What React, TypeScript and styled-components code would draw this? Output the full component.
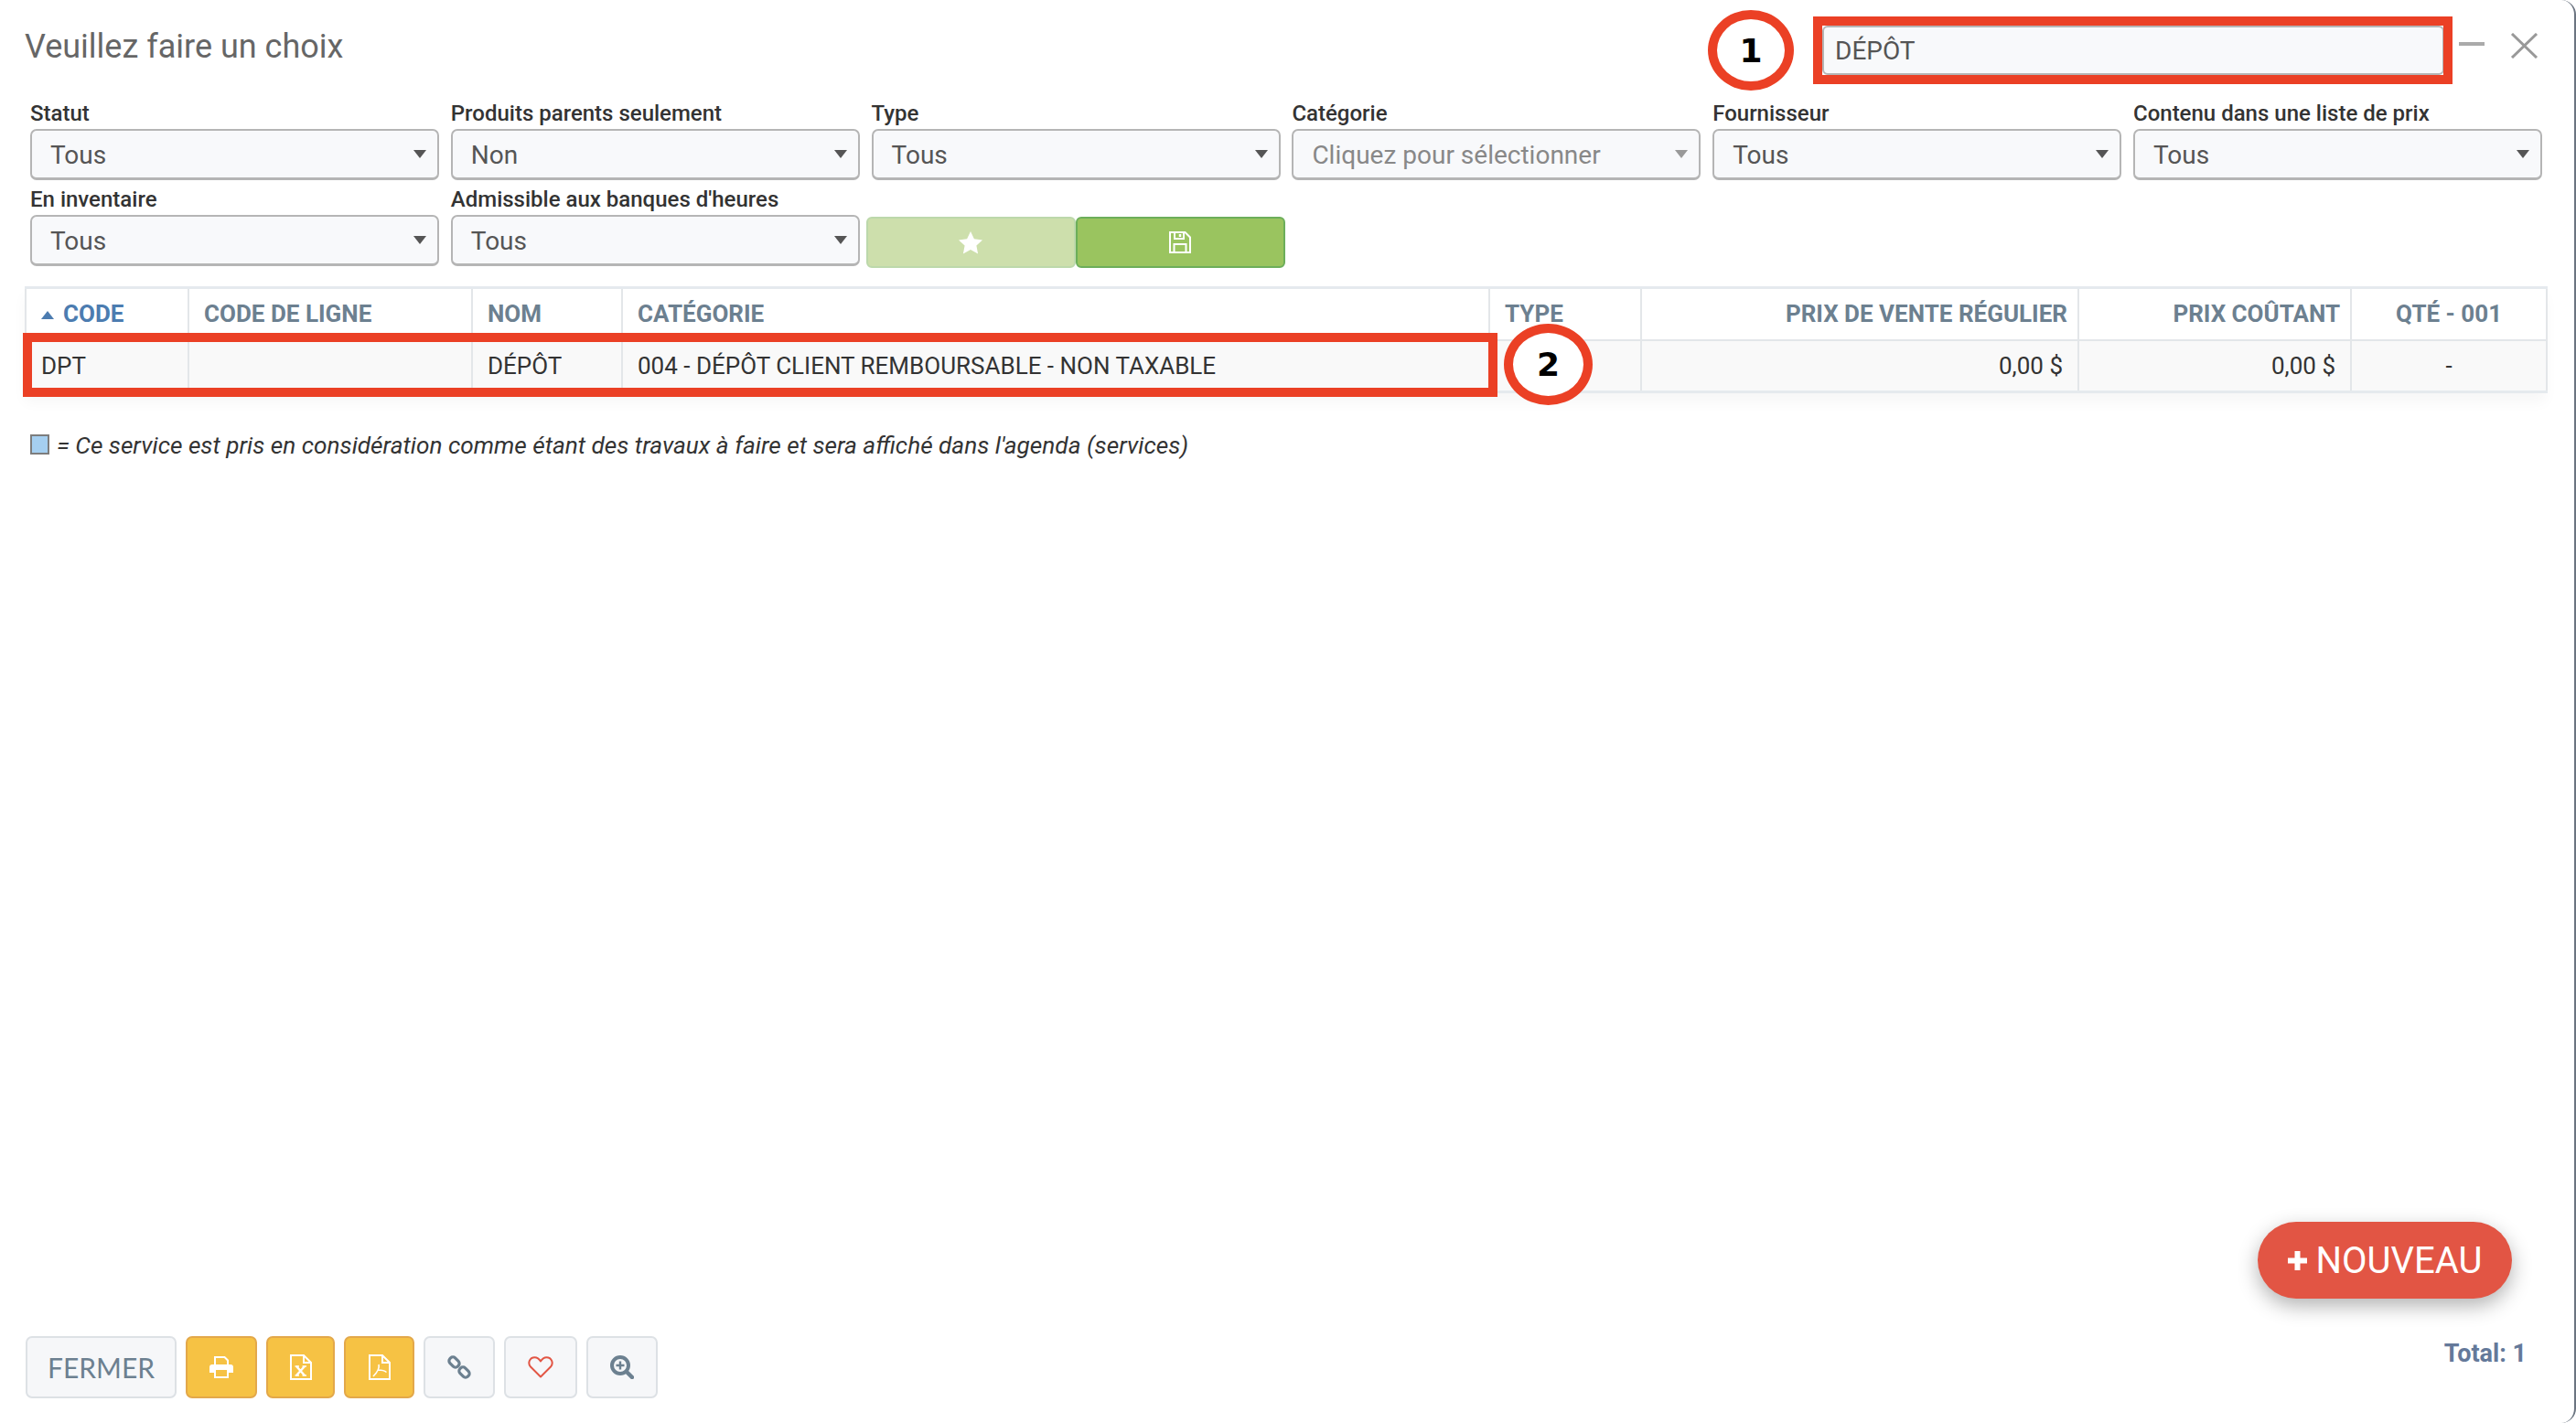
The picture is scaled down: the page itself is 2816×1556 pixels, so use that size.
import React from 'react'
import styled, { createGlobalStyle } from 'styled-components'

const GlobalStyle = createGlobalStyle`
  html, body {
    margin: 0;
    padding: 0;
    background: #ffffff;
  }

  * {
    box-sizing: border-box;
  }
`

const Modal = styled.div`
  position: relative;
  width: 2816px;
  height: 1556px;
  padding: 28px 0 27px 27px;
  display: flex;
  flex-direction: column;
  background: #ffffff;
  border-right: 2px solid #6b7480;
  border-radius: 0 16px 16px 0;
  overflow: hidden;
  font-family: Roboto, 'Liberation Sans', sans-serif;
  color: #333333;
`

const Header = styled.div`
  display: flex;
  align-items: flex-start;
  padding-right: 39px;
`

const Title = styled.div`
  flex: 1;
  font-size: 36px;
  line-height: 47px;
  color: #666666;
`

const SearchBox = styled.div`
  position: relative;
  width: 680px;
  height: 54px;
`

const SearchInput = styled.div`
  height: 100%;
  padding-left: 12px;
  display: flex;
  align-items: center;
  background: #f8f9fb;
  border: 2px solid #b5b5b5;
  border-radius: 6px;
  font-size: 28px;
  color: #555555;
`

const RedFrame = styled.div`
  position: absolute;
  border: 10px solid #eb4025;
  pointer-events: none;
`

const SearchFrame = styled(RedFrame)`
  inset: -10px -9px -10px -10px;
`

const RowFrame = styled(RedFrame)`
  left: -2px;
  top: 51px;
  width: 1612px;
  height: 70px;
`

const Bubble = styled.div`
  position: absolute;
  display: flex;
  align-items: center;
  justify-content: center;
  background: #ffffff;
  border: 10px solid #eb4025;
  border-radius: 50%;
  font-family: 'DejaVu Sans', sans-serif;
  font-weight: 700;
  font-size: 36px;
  color: #000000;
`

const SearchBubble = styled(Bubble)`
  left: -125px;
  top: -17px;
  width: 94px;
  height: 88px;
`

const RowBubble = styled(Bubble)`
  left: 1617px;
  top: 41px;
  width: 97px;
  height: 89px;
`

const MinimizeIcon = styled.div`
  width: 28px;
  height: 4px;
  margin: 18px 0 0 16px;
  background: #aaaaaa;
`

const CloseIcon = styled.svg`
  width: 31px;
  height: 28px;
  margin: 8px 0 0 28px;
`

const Filters = styled.div`
  display: grid;
  grid-template-columns: repeat(6, 447px);
  column-gap: 12.8px;
  row-gap: 8px;
  margin: 29px 0 0 6px;
`

const Field = styled.div`
  display: flex;
  flex-direction: column;
  gap: 4px;
`

const FieldLabel = styled.label`
  font-size: 24px;
  line-height: 26px;
  font-weight: 500;
  color: #333333;
`

const Select = styled.div<{ $disabled?: boolean }>`
  position: relative;
  height: 56px;
  padding: 2px 0 0 20px;
  display: flex;
  align-items: center;
  background: #f8f9fb;
  border: 2px solid #b5b5b5;
  border-bottom-width: 3px;
  border-radius: 7px;
  font-size: 28px;
  color: ${p => (p.$disabled ? '#888888' : '#555555')};

  &::after {
    content: '';
    position: absolute;
    right: 12px;
    top: 21px;
    border-left: 7.5px solid transparent;
    border-right: 7.5px solid transparent;
    border-top: 9px solid ${p => (p.$disabled ? '#999999' : '#555555')};
  }
`

const ActionButtons = styled.div`
  grid-column: 3 / span 2;
  display: flex;
  align-items: flex-end;
  margin: 0 0 -2px -6px;
`

const GreenButton = styled.button<{ $light?: boolean }>`
  width: 229px;
  height: 56px;
  padding: 0;
  display: flex;
  align-items: center;
  justify-content: center;
  background: ${p => (p.$light ? '#cddfac' : '#9ac45f')};
  border: 2px solid ${p => (p.$light ? '#bcd8ab' : '#6cae5a')};
  border-radius: 6px;
`

const TableWrap = styled.div`
  position: relative;
  width: 2756px;
  margin-top: 22px;
  box-shadow: 0 10px 14px rgba(0, 0, 0, 0.035);
`

const Table = styled.table`
  width: 100%;
  table-layout: fixed;
  border-collapse: collapse;
  border-top: 3px solid #e5eaee;
  border-bottom: 3px solid #e5eaee;
`

const HeadCell = styled.th<{ $align?: string; $sorted?: boolean }>`
  height: 57px;
  padding: ${p => (p.$align === 'right' ? '0 11px 0 0' : '0 16px')};
  text-align: ${p => p.$align || 'left'};
  border: 2px solid #e3e6e9;
  border-top: 0;
  font-size: 26px;
  font-weight: 700;
  color: ${p => (p.$sorted ? '#4c7cb0' : '#6c8090')};
  white-space: nowrap;
`

const SortArrow = styled.span`
  display: inline-block;
  margin-right: 10px;
  vertical-align: 3px;
  border-left: 7.5px solid transparent;
  border-right: 7.5px solid transparent;
  border-bottom: 9px solid #4c7cb0;
`

const Cell = styled.td<{ $align?: string }>`
  height: 57px;
  padding: 0 16px;
  text-align: ${p => p.$align || 'left'};
  background: #f9f9f9;
  border: 2px solid #e3e6e9;
  border-bottom: 0;
  font-size: 26px;
  color: #333333;
  white-space: nowrap;
`

const Legend = styled.div`
  display: flex;
  align-items: center;
  gap: 8px;
  margin: 42px 0 0 6px;
  font-size: 26.2px;
  font-style: italic;
  color: #333333;
`

const LegendSwatch = styled.span`
  width: 21px;
  height: 22px;
  margin-top: -2px;
  background: #a5cff0;
  border: 2px solid #7d7d7d;
`

const Footer = styled.div`
  margin-top: auto;
  display: flex;
  align-items: flex-start;
  justify-content: space-between;
  width: 2735px;
`

const FooterButtons = styled.div`
  display: flex;
  gap: 10px;
  margin-left: 1px;
`

const FooterButton = styled.button<{ $width: number; $yellow?: boolean }>`
  width: ${p => p.$width}px;
  height: 68px;
  padding: 0;
  display: flex;
  align-items: center;
  justify-content: center;
  background: ${p => (p.$yellow ? '#f6c244' : '#f6f7f9')};
  border: 2px solid ${p => (p.$yellow ? '#e3a84a' : '#dde1e5')};
  border-radius: 7px;
  font-family: Lato, Roboto, sans-serif;
  font-size: 30px;
  color: #6c8090;
`

const Total = styled.div`
  font-size: 27px;
  line-height: 38px;
  font-weight: 700;
  color: #64799a;
`

const NewButton = styled.button`
  position: absolute;
  right: 68px;
  bottom: 136px;
  width: 278px;
  height: 84px;
  display: flex;
  align-items: center;
  justify-content: center;
  gap: 10px;
  padding: 0;
  background: #e25544;
  border: 0;
  border-radius: 42px;
  box-shadow: 0 8px 22px rgba(0, 0, 0, 0.3);
  font-family: Roboto, sans-serif;
  font-size: 40px;
  color: #ffffff;
`

const PlusIcon = styled.svg`
  width: 21px;
  height: 21px;
`

const white = '#ffffff'
const slate = '#6c8090'

const StarIcon = () => (
  <svg width="26" height="25" viewBox="0 0 26 25">
    <path d="M13 0l3.900 8.200 9.100 1.200-6.600 6.200 1.700 9L13 20l-8.100 4.400 1.700-9L0 9.400l9.100-1.200z" fill={white} />
  </svg>
)

const SaveIcon = () => (
  <svg width="24" height="24" viewBox="0 0 24 24" fill="none" stroke={white} strokeWidth="2">
    <path d="M1 1h16.500L23 6.500V23H1z" />
    <path d="M6 1v7h10V1" />
    <path d="M12 3v3" strokeWidth="2.500" />
    <path d="M5.500 23v-9h13v9" />
  </svg>
)

const PrintIcon = () => (
  <svg width="26" height="24" viewBox="0 0 26 24">
    <path d="M6 10V1h10.500L20 4.500V10" fill="none" stroke={white} strokeWidth="2" />
    <path d="M3 9h20a3 3 0 0 1 3 3v6h-26v-6a3 3 0 0 1 3-3z" fill={white} />
    <rect x="6" y="14" width="14" height="9" fill="#f6c244" stroke={white} strokeWidth="2" />
  </svg>
)

const FileOutline = () => <path d="M1 1h14l8 8v18H1z M15 1v8h8" fill="none" stroke={white} strokeWidth="2" />

const ExcelIcon = () => (
  <svg width="24" height="28" viewBox="0 0 24 28">
    <FileOutline />
    <path d="M7 13l9 10M16 13l-9 10" fill="none" stroke={white} strokeWidth="2.400" />
    <path d="M5.500 13h4.500M13.500 13h4.500M5.500 23h4.500M13.500 23h4.500" fill="none" stroke={white} strokeWidth="1.400" />
  </svg>
)

const PdfIcon = () => (
  <svg width="24" height="28" viewBox="0 0 24 28">
    <FileOutline />
    <path d="M11 11c1 4-2 9-6 13M10.500 17c3 0 6 0 9 2.500" fill="none" stroke={white} strokeWidth="1.600" />
  </svg>
)

const LinkIcon = () => (
  <svg width="26" height="26" viewBox="0 0 26 26" fill="none" stroke={slate} strokeWidth="3.200">
    <rect x="3.500" y="1.500" width="8" height="12" rx="3.500" transform="rotate(-45 7.500 7.500)" />
    <rect x="14.500" y="12.500" width="8" height="12" rx="3.500" transform="rotate(-45 18.500 18.500)" />
  </svg>
)

const HeartIcon = () => (
  <svg width="28" height="24" viewBox="0 0 28 24">
    <path
      d="M14 22.500L3 11.500C-0.500 7.500 2 1.200 7.500 1.200C10.500 1.200 12.500 3 14 5.500C15.500 3 17.500 1.200 20.500 1.200C26 1.200 28.500 7.500 25 11.500Z"
      fill="none"
      stroke="#e25544"
      strokeWidth="2"
      strokeLinejoin="round"
    />
  </svg>
)

const ZoomIcon = () => (
  <svg width="26" height="26" viewBox="0 0 26 26" fill="none" stroke={slate}>
    <circle cx="11" cy="11" r="9" strokeWidth="4" />
    <path d="M11 6.500v9M6.500 11h9" strokeWidth="2.400" />
    <path d="M18 18l6 6" strokeWidth="4.500" strokeLinecap="round" />
  </svg>
)

const filterFields = [
  { label: 'Statut', value: 'Tous' },
  { label: 'Produits parents seulement', value: 'Non' },
  { label: 'Type', value: 'Tous' },
  { label: 'Catégorie', value: 'Cliquez pour sélectionner', disabled: true },
  { label: 'Fournisseur', value: 'Tous' },
  { label: 'Contenu dans une liste de prix', value: 'Tous' },
  { label: 'En inventaire', value: 'Tous' },
  { label: "Admissible aux banques d'heures", value: 'Tous' },
]

const columnWidths = [178, 310, 164, 948, 166, 478, 298, 214]

const App: React.FC = () => {
  return (
    <Modal>
      <GlobalStyle />
      <Header>
        <Title>Veuillez faire un choix</Title>
        <SearchBox>
          <SearchInput>DÉPÔT</SearchInput>
          <SearchFrame />
          <SearchBubble>1</SearchBubble>
        </SearchBox>
        <MinimizeIcon />
        <CloseIcon viewBox="0 0 31 28">
          <path d="M2 1l27 26M29 1L2 27" fill="none" stroke="#999999" strokeWidth="3" />
        </CloseIcon>
      </Header>

      <Filters>
        {filterFields.map(filter => (
          <Field key={filter.label}>
            <FieldLabel>{filter.label}</FieldLabel>
            <Select $disabled={filter.disabled}>{filter.value}</Select>
          </Field>
        ))}
        <ActionButtons>
          <GreenButton $light>
            <StarIcon />
          </GreenButton>
          <GreenButton>
            <SaveIcon />
          </GreenButton>
        </ActionButtons>
      </Filters>

      <TableWrap>
        <Table>
          <colgroup>
            {columnWidths.map((width, index) => (
              <col key={index} style={{ width }} />
            ))}
          </colgroup>
          <thead>
            <tr>
              <HeadCell $sorted>
                <SortArrow />
                CODE
              </HeadCell>
              <HeadCell>CODE DE LIGNE</HeadCell>
              <HeadCell>NOM</HeadCell>
              <HeadCell>CATÉGORIE</HeadCell>
              <HeadCell>TYPE</HeadCell>
              <HeadCell $align="right">PRIX DE VENTE RÉGULIER</HeadCell>
              <HeadCell $align="right">PRIX COÛTANT</HeadCell>
              <HeadCell $align="center">QTÉ - 001</HeadCell>
            </tr>
          </thead>
          <tbody>
            <tr>
              <Cell>DPT</Cell>
              <Cell />
              <Cell>DÉPÔT</Cell>
              <Cell>004 - DÉPÔT CLIENT REMBOURSABLE - NON TAXABLE</Cell>
              <Cell />
              <Cell $align="right">0,00 $</Cell>
              <Cell $align="right">0,00 $</Cell>
              <Cell $align="center">-</Cell>
            </tr>
          </tbody>
        </Table>
        <RowFrame />
        <RowBubble>2</RowBubble>
      </TableWrap>

      <Legend>
        <LegendSwatch />
        = Ce service est pris en considération comme étant des travaux à faire et sera affiché dans l'agenda (services)
      </Legend>

      <NewButton>
        <PlusIcon viewBox="0 0 21 21">
          <path d="M10.500 0v21M0 10.500h21" stroke={white} strokeWidth="6" />
        </PlusIcon>
        NOUVEAU
      </NewButton>

      <Footer>
        <FooterButtons>
          <FooterButton $width={165}>FERMER</FooterButton>
          <FooterButton $width={78} $yellow>
            <PrintIcon />
          </FooterButton>
          <FooterButton $width={75} $yellow>
            <ExcelIcon />
          </FooterButton>
          <FooterButton $width={77} $yellow>
            <PdfIcon />
          </FooterButton>
          <FooterButton $width={78}>
            <LinkIcon />
          </FooterButton>
          <FooterButton $width={80}>
            <HeartIcon />
          </FooterButton>
          <FooterButton $width={78}>
            <ZoomIcon />
          </FooterButton>
        </FooterButtons>
        <Total>Total: 1</Total>
      </Footer>
    </Modal>
  )
}

export default App
